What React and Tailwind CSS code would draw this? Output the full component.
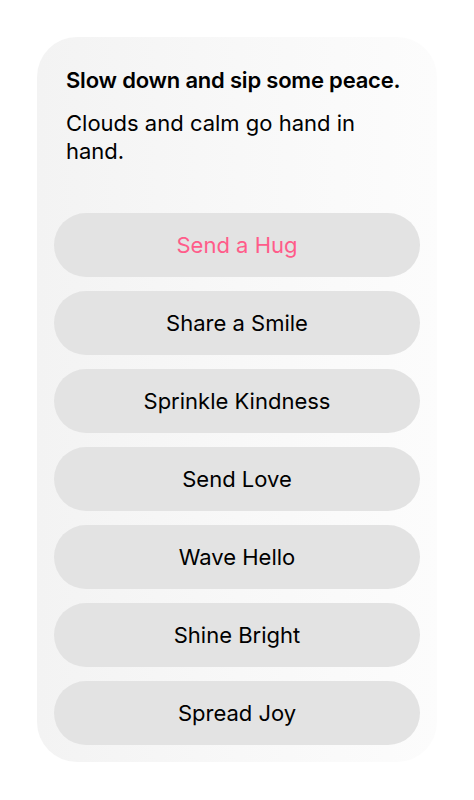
const actions = [
  "Send a Hug",
  "Share a Smile",
  "Sprinkle Kindness",
  "Send Love",
  "Wave Hello",
  "Shine Bright",
  "Spread Joy",
];

export default function App() {
  return (
    <div
      className="min-h-[800px] w-[474px] bg-white pt-[37px] pl-[37px]"
      style={{ fontFamily: "Inter, 'Liberation Sans', sans-serif" }}
    >
      <div className="w-[400px] rounded-[40px] bg-gradient-to-r from-[#f3f3f3] via-[#f8f8f8] to-[#fcfcfc] px-[17px] pb-[17px] pt-[29px]">
        <div className="px-3">
          <h1 className="text-[22px] font-semibold leading-[28px] text-black tracking-[-0.2px]">
            Slow down and sip some peace.
          </h1>
          <p className="mt-[15px] text-[22px] leading-[28px] text-black pr-8">
            Clouds and calm go hand in hand.
          </p>
        </div>
        <div className="mt-[48px] flex flex-col gap-[14px]">
          {actions.map((a, i) => (
            <button
              key={a}
              className={`h-[64px] w-full rounded-full bg-[#e3e3e3] text-[22px] ${
                i === 0 ? "text-[#ff5c8a]" : "text-black"
              }`}
            >
              {a}
            </button>
          ))}
        </div>
      </div>
    </div>
  );
}
